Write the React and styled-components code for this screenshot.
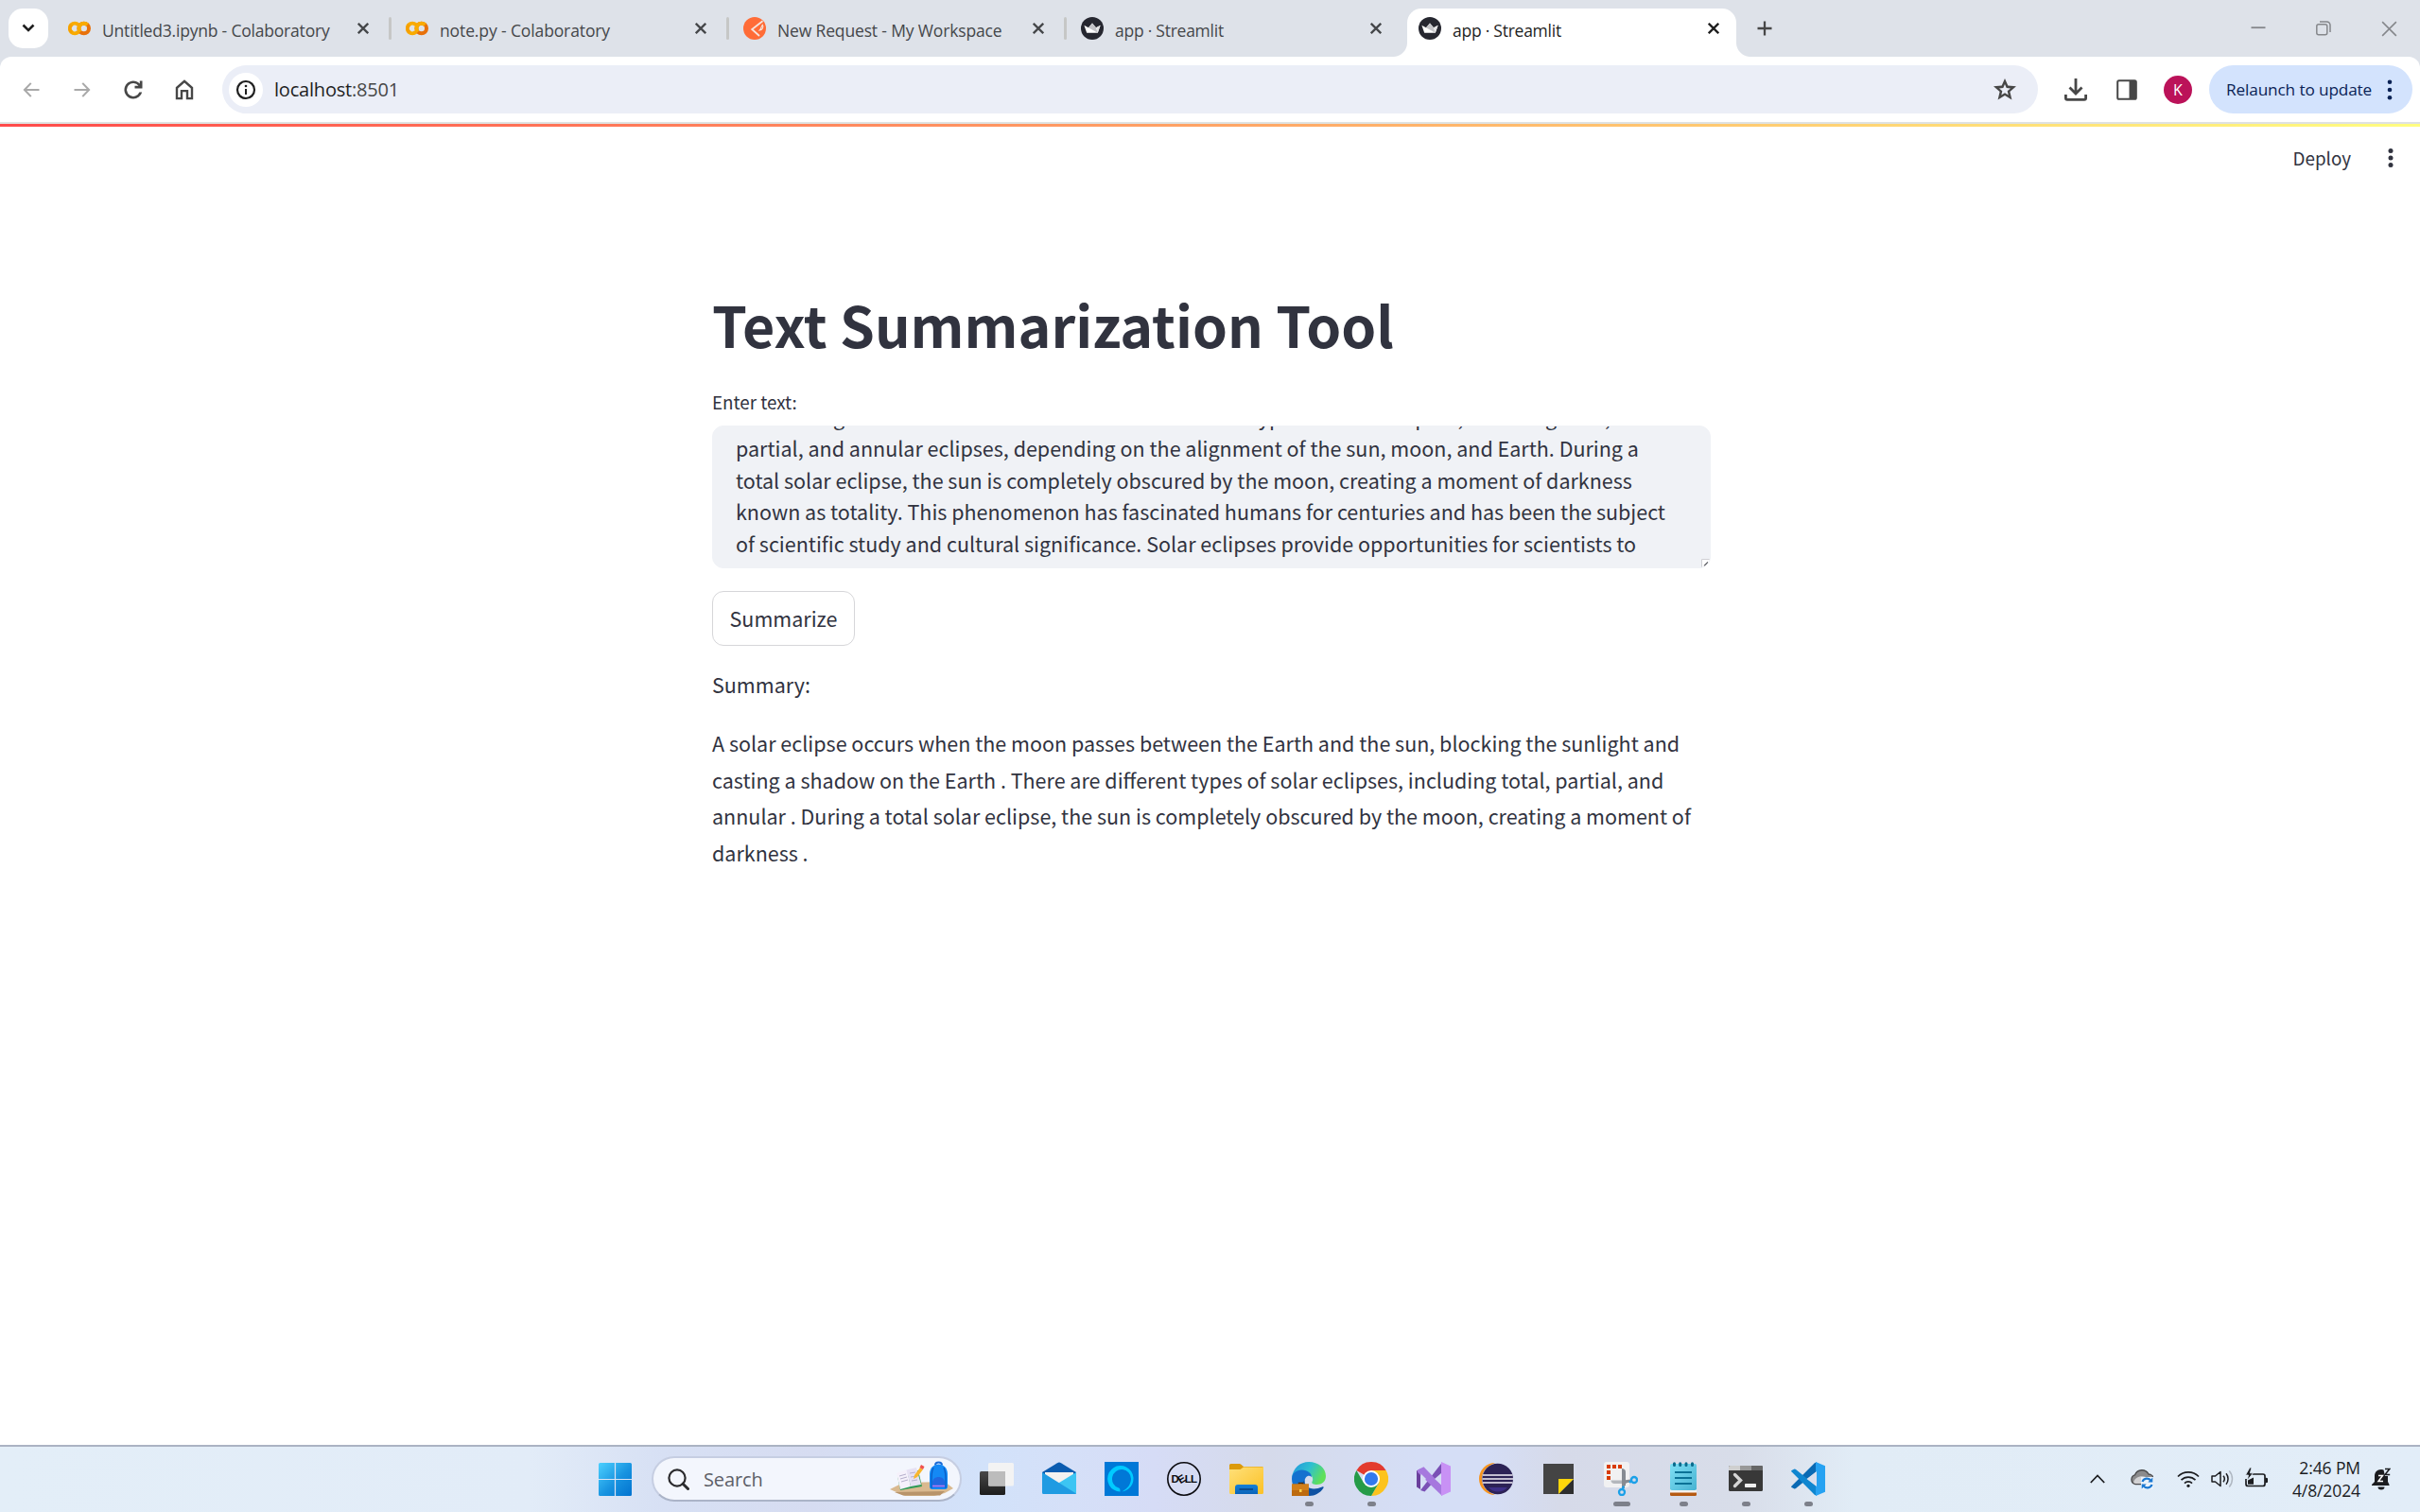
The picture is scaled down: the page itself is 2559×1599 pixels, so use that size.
import React from "react";
import styled, { createGlobalStyle, css } from "styled-components";

const UI_FONT = `"Open Sans", "Noto Sans", sans-serif`;
const APP_FONT = `"Noto Sans CJK SC", "Noto Sans", sans-serif`;

const GlobalStyle = createGlobalStyle`
  *, *::before, *::after { box-sizing: border-box; }
  html, body { margin: 0; padding: 0; background: #fff; }
  body { font-family: ${UI_FONT}; overflow: hidden; }
  svg { display: block; flex: none; }
`;

const Screen = styled.div`
  width: 2559px;
  height: 1599px;
  display: flex;
  flex-direction: column;
  background: #fff;
  overflow: hidden;
`;

/* ---------- Browser tab strip ---------- */

const TabStrip = styled.header`
  height: 60px;
  flex: none;
  display: flex;
  padding: 9px 0 0 9px;
  background: #dee2e9;
`;

const TabSearch = styled.button`
  width: 42px;
  height: 42px;
  margin-right: 9px;
  padding: 0;
  border: 0;
  border-radius: 15px;
  background: #fff;
  display: flex;
  align-items: center;
  justify-content: center;
`;

const Tab = styled.div`
  position: relative;
  width: 348px;
  height: 51px;
  padding: 0 18px 9px 12px;
  display: flex;
  align-items: center;
  color: ${(p) => (p.$active ? "#1f1f1f" : "#45474a")};
  ${(p) =>
    p.$active &&
    css`
      background: #fff;
      border-radius: 15px 15px 0 0;
      &::before,
      &::after {
        content: "";
        position: absolute;
        bottom: 0;
        width: 15px;
        height: 15px;
      }
      &::before {
        left: -15px;
        background: radial-gradient(circle at 0 0, transparent 14.5px, #fff 15.5px);
      }
      &::after {
        right: -15px;
        background: radial-gradient(circle at 100% 0, transparent 14.5px, #fff 15.5px);
      }
    `}
`;

const TabTitle = styled.span`
  flex: 1;
  margin-left: 12px;
  padding-top: 3px;
  font-size: 17.5px;
  line-height: 26px;
  letter-spacing: ${(p) => p.$track || 0}px;
  white-space: nowrap;
`;

const TabGap = styled.div`
  width: 9px;
  height: 42px;
  display: flex;
  align-items: center;
  justify-content: center;
  &::after {
    content: "";
    width: 3px;
    height: 24px;
    border-radius: 1.5px;
    background: ${(p) => (p.$line ? "#c6c7c6" : "transparent")};
  }
`;

const NewTab = styled.div`
  width: 60px;
  height: 42px;
  display: flex;
  align-items: center;
  justify-content: center;
`;

const WindowControls = styled.div`
  margin-left: auto;
  height: 42px;
  display: flex;
  align-items: center;
  gap: 53px;
  padding-right: 24px;
`;

/* ---------- Browser toolbar ---------- */

const ToolbarBack = styled.div`
  flex: none;
  background: #dee2e9;
`;

const Toolbar = styled.div`
  height: 71px;
  padding: 9px 8px 9px 21px;
  display: flex;
  align-items: center;
  background: #fff;
  border-bottom: 2px solid #dfe2e1;
  border-radius: 12px 12px 0 0;
`;

const NavButtons = styled.div`
  display: flex;
  gap: 30px;
  width: 214px;
`;

const AddressBar = styled.div`
  width: 1920px;
  height: 51px;
  padding: 0 23px 0 7px;
  border-radius: 26px;
  background: #ebeef7;
  display: flex;
  align-items: center;
`;

const SiteInfo = styled.div`
  width: 36px;
  height: 36px;
  border-radius: 50%;
  background: #fff;
  display: flex;
  align-items: center;
  justify-content: center;
`;

const Address = styled.span`
  flex: 1;
  margin-left: 12px;
  font-size: 20px;
  line-height: 30px;
  letter-spacing: ${(p) => p.$track}px;
  color: #474747;
`;

const Host = styled.span`
  color: #1f1f1f;
`;

const Actions = styled.div`
  margin-left: auto;
  display: flex;
  align-items: center;
`;

const ActionIcon = styled.div`
  width: 54px;
  display: flex;
  justify-content: center;
`;

const Avatar = styled.div`
  width: 30px;
  height: 30px;
  margin: 0 18px 0 12px;
  border-radius: 50%;
  background: #bb1259;
  color: #fff;
  font-size: 16px;
  line-height: 30px;
  text-align: center;
`;

const Relaunch = styled.button`
  width: 215px;
  height: 51px;
  padding: 0 21px 0 18px;
  border: 0;
  border-radius: 26px;
  background: #d3e3fd;
  color: #0a2255;
  display: flex;
  align-items: center;
  justify-content: space-between;
  font-family: ${UI_FONT};
  font-size: 17.2px;
  letter-spacing: ${(p) => p.$track}px;
  white-space: nowrap;
`;

/* ---------- Streamlit page ---------- */

const Page = styled.main`
  flex: 1;
  display: flex;
  flex-direction: column;
  align-items: center;
  background: #fff;
  color: #31333f;
  font-family: ${APP_FONT};
`;

const Decoration = styled.div`
  align-self: stretch;
  height: 3px;
  background: linear-gradient(90deg, #ff4b4b, #fffd80);
`;

const PageHeader = styled.div`
  align-self: stretch;
  height: 65px;
  padding-right: 28px;
  display: flex;
  align-items: center;
  justify-content: flex-end;
  gap: 39px;
`;

const Deploy = styled.span`
  font-size: 18.8px;
  line-height: 30px;
`;

const Block = styled.section`
  width: 1056px;
  margin-left: 3px;
  display: flex;
  flex-direction: column;
  align-items: flex-start;
`;

const Heading = styled.h1`
  margin: 104px 0 0;
  font-size: 59.1px;
  line-height: 79px;
  font-weight: 700;
  white-space: nowrap;
`;

const Label = styled.label`
  margin-top: 28px;
  font-size: 18.8px;
  line-height: 30px;
`;

const TextArea = styled.div`
  position: relative;
  width: 1056px;
  height: 151px;
  margin-top: 10px;
  border: 1px solid #f0f2f6;
  border-radius: 12px;
  background: #f0f2f6;
  overflow: hidden;
`;

const TextAreaContent = styled.div`
  margin: -27.5px 24px 0;
  font-size: 21.5px;
  line-height: 33.6px;
  white-space: nowrap;
`;

const Line = styled.div`
  letter-spacing: 0;
`;

const Resizer = styled.svg`
  position: absolute;
  right: 0;
  bottom: 0;
`;

const Button = styled.button`
  height: 58px;
  width: 151px;
  margin-top: 24px;
  padding: 0;
  border: 1px solid #d6d6d9;
  border-radius: 12px;
  background: #fff;
  color: #31333f;
  font-family: ${APP_FONT};
  font-size: 21.5px;
  line-height: 36px;
`;

const Paragraph = styled.p`
  margin: ${(p) => p.$top}px 0 0;
  font-size: 21.5px;
  line-height: 38.4px;
  white-space: nowrap;
`;

/* ---------- Taskbar ---------- */

const Taskbar = styled.footer`
  height: 71px;
  flex: none;
  display: flex;
  align-items: flex-start;
  padding: 10px 31px 0 633px;
  border-top: 2px solid #abb3c3;
  background: linear-gradient(
    90deg,
    #e3eef8 0,
    #e2ecf8 560px,
    #d7e0f4 700px,
    #d6dcf1 860px,
    #d2e2fa 1040px,
    #d5e0f8 1130px,
    #d6dcf6 1220px,
    #d5daea 1340px,
    #d5def6 1500px,
    #d5def6 1570px,
    #d6dae9 1650px,
    #d8dde9 1840px,
    #e1ecf6 1960px,
    #e2edf8 2559px
  );
`;

const StartButton = styled.div`
  width: 36px;
  height: 49px;
  margin-right: 20px;
  display: flex;
  align-items: center;
`;

const SearchBox = styled.div`
  width: 328px;
  height: 48px;
  margin-right: 19px;
  padding: 0 7px 0 15px;
  border: 2px solid #c6cee2;
  border-bottom-color: #abb4c8;
  border-radius: 24px;
  background: #f3f6fd;
  display: flex;
  align-items: center;
`;

const SearchLabel = styled.span`
  flex: 1;
  margin-left: 15px;
  padding-top: 1px;
  font-size: 20px;
  line-height: 30px;
  letter-spacing: ${(p) => p.$track}px;
  color: #5d6068;
`;

const AppSlot = styled.div`
  width: 36px;
  height: 53px;
  margin-right: 30px;
  padding-top: 6px;
  display: flex;
  flex-direction: column;
  align-items: center;
  justify-content: space-between;
`;

const Running = styled.div`
  width: ${(p) => (p.$wide ? 18 : 9)}px;
  height: 5px;
  margin-left: 1px;
  border-radius: 2.5px;
  background: ${(p) => (p.$on ? "#7d808a" : "transparent")};
`;

const Tray = styled.div`
  height: 47px;
  margin-left: auto;
  display: flex;
  align-items: center;
`;

const TrayItem = styled.div`
  margin-right: ${(p) => p.$gap}px;
`;

const Clock = styled.div`
  margin-right: 12px;
  display: flex;
  flex-direction: column;
  align-items: flex-end;
  font-size: 17.5px;
  line-height: 24px;
  letter-spacing: -0.1px;
  color: #1b1c1f;
  white-space: nowrap;
`;

/* ---------- Icons ---------- */

const ColabIcon = () => (
  <svg width="24" height="24" viewBox="0 0 24 24" fill="none" strokeWidth="4">
    <path d="M10.8 8.2A5.3 5.3 0 1 0 10.8 15.8" stroke="#f9ab00" />
    <path d="M3.6 8.2A5.3 5.3 0 0 0 4 16.2" stroke="#f08c04" strokeWidth="3.6" opacity=".35" />
    <circle cx="16.7" cy="12" r="5.3" stroke="#e8710a" />
    <path d="M12.95 15.75A5.3 5.3 0 0 1 20.45 8.25" stroke="#f9ab00" />
  </svg>
);

const PostmanIcon = () => (
  <svg width="24" height="24" viewBox="0 0 24 24">
    <circle cx="12" cy="12" r="12" fill="#ff6c37" />
    <path d="M20.5 4.2 9.2 13l7.8 7" fill="none" stroke="#f6e5de" strokeWidth="1.8" />
    <path d="M20.3 8.200c1.600 2.400-.4 5.600-3 5.800 1.800-1.600 1-2.600 3-5.800z" fill="none" stroke="#f6e5de" strokeWidth="1.1" />
  </svg>
);

const StreamlitIcon = () => (
  <svg width="24" height="24" viewBox="0 0 24 24">
    <circle cx="12" cy="12" r="12" fill="#262730" />
    <path d="M3.4 8.8 8 11.2 12 6.500l4 4.700 4.600-2.400-2.800 8H6.200z" fill="#fff" />
    <path d="M12 6.500l4 4.700 1.800 5.600L8 11.200z" fill="#c4c4c8" />
    <path d="M16 11.200l4.600-2.400-2.800 8z" fill="#e4e4e6" />
  </svg>
);

const CloseIcon = ({ size = 12, stroke = "#45474a", width = 2.3 }) => (
  <svg width={size} height={size} viewBox="0 0 12 12">
    <path d="M.8.8l10.400 10.400M11.200.8.8 11.200" stroke={stroke} strokeWidth={width} fill="none" />
  </svg>
);

const CaretDown = () => (
  <svg width="14" height="10" viewBox="0 0 14 10">
    <path d="M1.500 1.500 7 7l5.500-5.500" fill="none" stroke="#1f1f1f" strokeWidth="2.6" />
  </svg>
);

const NavIcon = ({ d, color = "#474747" }) => (
  <svg width="24" height="24" viewBox="0 0 24 24">
    <path d={d} fill={color} />
  </svg>
);

const Dots = ({ color, r = 2.3, gap = 8 }) => (
  <svg width="6" height="24" viewBox="0 0 6 24">
    {[-1, 0, 1].map((n) => (
      <circle key={n} cx="3" cy={12 + n * gap} r={r} fill={color} />
    ))}
  </svg>
);

const WindowsLogo = () => (
  <svg width="35" height="35" viewBox="0 0 35 35">
    <defs>
      <linearGradient id="win" x1="0" y1="0" x2="35" y2="35" gradientUnits="userSpaceOnUse">
        <stop offset="0" stopColor="#4cd0ff" />
        <stop offset=".55" stopColor="#1793e0" />
        <stop offset="1" stopColor="#0273d0" />
      </linearGradient>
    </defs>
    <path
      fill="url(#win)"
      d="M1.500 0H16.900V16.900H0V1.500A1.500 1.500 0 0 1 1.500 0zM18.100 0H33.500A1.500 1.500 0 0 1 35 1.500V16.900H18.100zM0 18.100H16.900V35H1.500A1.500 1.500 0 0 1 0 33.500zM18.100 18.100H35V33.500A1.500 1.500 0 0 1 33.500 35H18.100z"
    />
  </svg>
);

const SearchArt = () => (
  <svg width="67" height="38" viewBox="0 0 67 38">
    <path d="M0 30 14 23 58 22 67 29 58 34 47 37H16z" fill="#d9b98f" />
    <path d="M5 33l53-1-5 4.500H14z" fill="#b8946a" />
    <path d="M8 16l22-6 4 17-23 4z" fill="#2f9a56" />
    <path d="M7 13l11-4 4 18-11 3z" fill="#f5f1fb" />
    <path d="M17.500 9.500 28 7l5 18-11 2z" fill="#e6e1f3" />
    <path d="M10 16l7-2M11 19l7-2M12 22l7-2M21 13l6-1M22 17l6-1M23 21l6-1" stroke="#b6b0cc" strokeWidth="1" />
    <path d="M25 19l1-4 6-8 3 2-6 8z" fill="#f8b62d" />
    <path d="M31.500 7 33 4l3.500 2L35 9z" fill="#f0524f" />
    <path d="M48 4.500c0-4 7-4 7 0" fill="none" stroke="#1a6ad6" strokeWidth="2" />
    <path d="M42 14c0-14 19-14 19 0v13a3 3 0 0 1-3 3H45a3 3 0 0 1-3-3z" fill="#1489f5" />
    <path d="M46 7c-2 5-2 8-2 22M57 7c2 5 2 8 2 22" fill="none" stroke="#0a5bc4" strokeWidth="1.200" />
    <path d="M45 23c0-8 13-8 13 0v5H45z" fill="#2167e0" />
    <path d="M45 26.500h13" stroke="#b77bf5" strokeWidth="1.500" />
  </svg>
);

const Art = ({ children }) => (
  <svg width="36" height="36" viewBox="0 0 36 36">
    {children}
  </svg>
);

const TaskViewIcon = () => (
  <Art>
    <defs>
      <linearGradient id="tv" x1="0" y1="0" x2="0" y2="1">
        <stop offset="0" stopColor="#484848" />
        <stop offset="1" stopColor="#1d1d1d" />
      </linearGradient>
    </defs>
    <rect x="0" y="10" width="27" height="25" rx="1.500" fill="url(#tv)" />
    <rect x="9" y="1" width="27" height="24.500" rx="1.500" fill="#f3f3f3" />
    <path d="M9 10h18v15.500H10.500A1.500 1.500 0 0 1 9 24z" fill="#bcbcbc" />
  </Art>
);

const MailIcon = () => (
  <Art>
    <path d="M0 11 16 1.200a4 4 0 0 1 4 0L36 11v8H0z" fill="#0a5cb0" />
    <path d="M3 11h30v9L18 24 3 20z" fill="#f3f1f0" />
    <path d="M36 11v21.500a1.500 1.500 0 0 1-1.500 1.500H10L18 22z" fill="#3cc5f3" />
    <path d="M0 11l36 22.500a2 2 0 0 1-1.500.5h-33A1.500 1.500 0 0 1 0 32.500z" fill="#1f9be2" />
  </Art>
);

const AlexaIcon = () => (
  <Art>
    <path d="M0 0h36v36H0z" fill="#0078d7" />
    <path
      d="M16.500 31.500A13.700 13.700 0 1 1 18.500 31.400C21 29.500 27.500 27 28 18A10 10 0 1 0 15 27.600C16.300 28.200 16.500 29 16.500 31.500z"
      fill="#00caff"
    />
  </Art>
);

const DellText = styled.text`
  font-family: "Liberation Sans", sans-serif;
  font-size: 11.5px;
  font-weight: 700;
`;

const DellIcon = () => (
  <Art>
    <circle cx="18" cy="18" r="17.200" fill="none" stroke="#0c0c10" strokeWidth="1.600" />
    <g fill="#0c0c10">
      <DellText x="4.500" y="22">D</DellText>
      <DellText x="11.600" y="22" transform="rotate(-32 15.500 18)">E</DellText>
      <DellText x="18.800" y="22">L</DellText>
      <DellText x="25" y="22">L</DellText>
    </g>
  </Art>
);

const FolderIcon = () => (
  <Art>
    <defs>
      <linearGradient id="fo" x1="0" y1="0" x2="1" y2="1">
        <stop offset="0" stopColor="#ffe07a" />
        <stop offset="1" stopColor="#fbc126" />
      </linearGradient>
      <linearGradient id="fb" x1="0" y1="0" x2="0" y2="1">
        <stop offset="0" stopColor="#1680d8" />
        <stop offset="1" stopColor="#0a63b8" />
      </linearGradient>
    </defs>
    <path d="M0 3.500A1.500 1.500 0 0 1 1.500 2h8.500c1.500 0 2.500.7 3.500 1.700L15 5h19.500a1.500 1.500 0 0 1 1.500 1.500V12H0z" fill="#dc9a0b" />
    <path d="M0 8h11.500L15 5.500h21v27a1.500 1.500 0 0 1-1.500 1.500h-33A1.500 1.500 0 0 1 0 32.500z" fill="url(#fo)" />
    <path d="M6 34v-7a3 3 0 0 1 3-3h18a3 3 0 0 1 3 3v7z" fill="url(#fb)" />
    <path d="M10.500 29h14.500" stroke="#0a3f7c" strokeWidth="1.500" />
  </Art>
);

const EdgeIcon = () => (
  <Art>
    <defs>
      <linearGradient id="e1" x1="0" y1="0" x2="1" y2=".4">
        <stop offset="0" stopColor="#1f94e0" />
        <stop offset=".55" stopColor="#2fc0cf" />
        <stop offset="1" stopColor="#5fe05a" />
      </linearGradient>
    </defs>
    <path d="M0 17C1 6.500 9 0 18 0c10 0 18 6.500 18 15 0 6-4.500 9-9.500 9-3.500 0-6-1.200-5-3 1.500-2 1-7-4-7.500C10 12.500 2 12 0 17z" fill="url(#e1)" />
    <path d="M0 18c0-6 5-9.500 10.500-9.500C17 8.500 21 12.500 21 16c-3.500-3-7.500 0-7.500 5 0 6 6 11 13 10-12 9-26.500.5-26.500-13z" fill="#1471cf" />
    <path d="M13.500 19c-1 8 8 12 18.500 7.500 1.500-.5 2 .5 1.500 1C30 33 24.500 36 18.500 36 10 33 9 24 13.500 19z" fill="#0f52a3" />
    <path d="M7.500 24v-1.500h4V24" fill="none" stroke="#4b2a08" strokeWidth="1.500" />
    <path d="M0 23.500h18V36H0z" fill="#bd6a0e" />
    <path d="M0 23.500h18V30H0z" fill="#d27f1a" />
    <path d="M8 29h2.500v3H8z" fill="#ffd24a" />
  </Art>
);

const ChromeIcon = () => (
  <Art>
    <path d="M18 18 2.410 9A18 18 0 0 1 33.590 9z" fill="#e33b2e" />
    <path d="M18 9H33.590A18 18 0 0 1 18 36L25.800 22.500z" fill="#fcc31e" />
    <path d="M2.410 9A18 18 0 0 0 18 36L25.800 22.500 10.200 22.500z" fill="#259b48" />
    <circle cx="18" cy="18" r="9" fill="#fff" />
    <circle cx="18" cy="18" r="7.100" fill="#3279ee" />
  </Art>
);

const VisualStudioIcon = () => (
  <Art>
    <path d="M0 9.500 4 7.500V29L0 26.500z" fill="#6a3f9c" />
    <path d="M4 29.500 8.500 31 27 11V0z" fill="#7a50b5" transform="translate(0 .5)" />
    <path d="M1 8.500 7.500 5.200 27 25.500V36L1 11z" fill="#a678de" />
    <path d="M26 0 36 4.500v27L26 36z" fill="#c891f5" />
    <path d="M4.500 12.500 10 18l-5.500 5.500z" fill="#d5dcf3" />
    <path d="M19 18l7-6v12z" fill="#d5dcf3" />
  </Art>
);

const EclipseIcon = () => (
  <Art>
    <path d="M17 1A17 17 0 0 0 17 35C8 31 3 26 3 18S8 5 17 1z" fill="#f7941e" />
    <circle cx="19.700" cy="18" r="16.300" fill="#2c2255" />
    <path d="M10 27h20c-5 6-15 6-20 0z" fill="#3d2f86" />
    <path d="M4 14h31.500M3.500 18H36M4 22h31.500" stroke="#f2f0f8" strokeWidth="1.700" />
  </Art>
);

const StickyIcon = () => (
  <Art>
    <path d="M2 2h32v16L18 34H2z" fill="#444" />
    <path d="M34 18v16H18z" fill="#2e2e2e" />
    <path d="M18 18h16L18 34z" fill="#ffd60a" />
  </Art>
);

const SnipIcon = () => (
  <Art>
    <rect x="0" y="0" width="27" height="27" rx="3" fill="#f1f1f2" />
    <path d="M3 3h4v4H3zM9 3h4v4H9zM15 3h4v4h-4zM3 9h4v4H3zM3 15h4v4H3z" fill="#d83b01" />
    <path d="M7.500 19.500H24v3.500H11c-2 0-3.500-1.500-3.500-3.500z" fill="#b4b8bd" />
    <path d="M19 7c2 0 4 1.500 4 3.500V25l-4 2z" fill="#868b92" />
    <path d="M22 21l6-1M20.500 23v5" stroke="#868b92" strokeWidth="3" />
    <circle cx="32" cy="19" r="3" fill="none" stroke="#1ba0e8" strokeWidth="2.300" />
    <circle cx="19" cy="32" r="3" fill="none" stroke="#1ba0e8" strokeWidth="2.300" />
    <path d="M29 20l-2 1.800M20 28.500l.8-3" stroke="#1ba0e8" strokeWidth="2.400" />
  </Art>
);

const NotepadIcon = () => (
  <Art>
    <defs>
      <linearGradient id="np" x1="0" y1="0" x2="1" y2="1">
        <stop offset="0" stopColor="#7fe0f5" />
        <stop offset="1" stopColor="#48b3d2" />
      </linearGradient>
    </defs>
    <path d="M4 32h28v2.500a1.500 1.500 0 0 1-1.500 1.500h-25A1.500 1.500 0 0 1 4 34.500z" fill="#b55a12" />
    <path d="M4 29h28v3.500H4z" fill="#f6f1ec" />
    <rect x="4" y="2" width="28" height="28" rx="1.800" fill="url(#np)" />
    <path d="M8.500 1.700v1.800M14.700 1.700v1.800M21 1.700v1.800M27.500 1.700v1.800" stroke="#0b6b8d" strokeWidth="3" strokeLinecap="round" />
    <path d="M9 11h18M9 17h18M9 23h18" stroke="#0b7296" strokeWidth="2" />
  </Art>
);

const TerminalIcon = () => (
  <Art>
    <rect x="0" y="4" width="36" height="27" rx="1.500" fill="#383838" />
    <path d="M1.500 4H12v5H0V5.500A1.500 1.500 0 0 1 1.500 4z" fill="#cfcfcf" />
    <path d="M12 4h12v5H12z" fill="#989898" />
    <path d="M24 4h10.500A1.500 1.500 0 0 1 36 5.500V9H24z" fill="#666" />
    <path d="M6.500 13.500l6 6-6 6" fill="none" stroke="#d6d6d6" strokeWidth="3.400" strokeLinecap="round" />
    <rect x="17" y="23" width="12" height="4" rx=".8" fill="#f0f0f0" />
  </Art>
);

const VSCodeIcon = () => (
  <Art>
    <path d="M.6 25.500a1 1 0 0 0 0 1.600L3 28.200a2 2 0 0 0 2-.2L27 10V.5l-2 .5z" fill="#0a6ab4" />
    <path d="M.6 10.500a1 1 0 0 1 0-1.600L3 7.800a2 2 0 0 1 2 .2L27 26v9.500l-2-.5z" fill="#0f86d0" />
    <path d="M26 0 36 4.300V31.700L26 36z" fill="#26a2f2" />
    <path d="M16.500 18 27 10v16z" fill="#d8dfee" />
  </Art>
);

const APPS = [
  { name: "Task View", Icon: TaskViewIcon },
  { name: "Mail", Icon: MailIcon },
  { name: "Alexa", Icon: AlexaIcon },
  { name: "Dell", Icon: DellIcon },
  { name: "File Explorer", Icon: FolderIcon },
  { name: "Edge", Icon: EdgeIcon, running: true },
  { name: "Chrome", Icon: ChromeIcon, running: true },
  { name: "Visual Studio", Icon: VisualStudioIcon },
  { name: "Eclipse", Icon: EclipseIcon },
  { name: "Sticky Notes", Icon: StickyIcon },
  { name: "Snipping Tool", Icon: SnipIcon, running: true, wide: true },
  { name: "Notepad", Icon: NotepadIcon, running: true },
  { name: "Terminal", Icon: TerminalIcon, running: true },
  { name: "VS Code", Icon: VSCodeIcon, running: true },
];

const TABS = [
  { title: "Untitled3.ipynb - Colaboratory", Icon: ColabIcon, track: -0.2 },
  { title: "note.py - Colaboratory", Icon: ColabIcon, track: -0.12 },
  { title: "New Request - My Workspace", Icon: PostmanIcon, track: -0.15 },
  { title: "app · Streamlit", Icon: StreamlitIcon, track: -0.25 },
  { title: "app · Streamlit", Icon: StreamlitIcon, track: -0.25, active: true },
];

const ENTERED = [
  "and casting a shadow on the Earth. There are different types of solar eclipses, including total,",
  "partial, and annular eclipses, depending on the alignment of the sun, moon, and Earth. During a",
  "total solar eclipse, the sun is completely obscured by the moon, creating a moment of darkness",
  "known as totality. This phenomenon has fascinated humans for centuries and has been the subject",
  "of scientific study and cultural significance. Solar eclipses provide opportunities for scientists to",
];

const SUMMARY = [
  "A solar eclipse occurs when the moon passes between the Earth and the sun, blocking the sunlight and",
  "casting a shadow on the Earth . There are different types of solar eclipses, including total, partial, and",
  "annular . During a total solar eclipse, the sun is completely obscured by the moon, creating a moment of",
  "darkness .",
];

export default function App() {
  return (
    <>
      <GlobalStyle />
      <Screen>
        <TabStrip>
          <TabSearch>
            <CaretDown />
          </TabSearch>
          {TABS.map((t, i) => (
            <React.Fragment key={i}>
              <Tab $active={t.active}>
                <t.Icon />
                <TabTitle $track={t.track}>{t.title}</TabTitle>
                <CloseIcon stroke={t.active ? "#1f1f1f" : "#45474a"} />
              </Tab>
              {i < TABS.length - 1 && <TabGap $line={i < 3} />}
            </React.Fragment>
          ))}
          <NewTab>
            <svg width="16" height="16" viewBox="0 0 16 16">
              <path d="M8 .5v15M.5 8h15" stroke="#474747" strokeWidth="2.300" />
            </svg>
          </NewTab>
          <WindowControls>
            <svg width="16" height="16" viewBox="0 0 16 16">
              <path d="M.5 7.200h15" stroke="#85878b" strokeWidth="1.800" />
            </svg>
            <svg width="16" height="16" viewBox="0 0 16 16" fill="none" stroke="#85878b" strokeWidth="1.500">
              <rect x=".8" y="3.800" width="11" height="11" rx="2" />
              <path d="M4 1h7.500A3.500 3.500 0 0 1 15 4.500V12" />
            </svg>
            <CloseIcon size={17} stroke="#85878b" width={1.1} />
          </WindowControls>
        </TabStrip>

        <ToolbarBack>
          <Toolbar>
            <NavButtons>
              <NavIcon color="#a9a9a9" d="M20.500 11H7.300l5.200-5.400L11 4.200 3.500 12l7.500 7.800 1.500-1.400L7.300 13h13.200z" />
              <NavIcon color="#a9a9a9" d="M3.500 11h13.200l-5.200-5.400L13 4.200l7.500 7.800-7.500 7.800-1.500-1.400 5.200-5.400H3.500z" />
              <NavIcon d="M12 21.500a9.500 9.500 0 1 1 6.800-16.100V2.500H21.500V10.500H13.500V7.800h4A6.900 6.900 0 1 0 18.400 14.500H21.200A9.500 9.500 0 0 1 12 21.500z" />
              <NavIcon d="M2.800 22.300V9.200L12 1.300l9.200 7.900v13.100h-7.400V14.300h-3.600v8zM5.200 19.900h2.600v-8h8.400v8h2.600V10.400L12 4.500l-6.800 5.900z" />
            </NavButtons>
            <AddressBar>
              <SiteInfo>
                <svg width="22" height="22" viewBox="0 0 22 22">
                  <circle cx="11" cy="11" r="9" fill="none" stroke="#1f1f1f" strokeWidth="2.200" />
                  <path d="M11 10v6" stroke="#1f1f1f" strokeWidth="2" />
                  <circle cx="11" cy="7" r="1.300" fill="#1f1f1f" />
                </svg>
              </SiteInfo>
              <Address $track={-0.2}>
                <Host>localhost</Host>:8501
              </Address>
              <NavIcon d="M4.600 22.500 6.600 14 0 8.300l8.700-.8L12 0l3.300 7.500 8.700.8L17.400 14l2 8.500L12 18zM8.300 17.500 12 15.300l3.700 2.200-1-4.200L18 10.500l-4.300-.4L12 6l-1.700 4.100-4.300.4 3.300 2.800z" />
            </AddressBar>
            <Actions>
              <ActionIcon>
                <svg width="26" height="26" viewBox="0 0 26 26" fill="none" stroke="#474747" strokeWidth="2.800">
                  <path d="M13 1v16M6.500 10.500 13 17l6.500-6.500M2.400 18v3.800c0 1 .6 1.600 1.600 1.600h18c1 0 1.600-.6 1.600-1.600V18" />
                </svg>
              </ActionIcon>
              <ActionIcon>
                <svg width="22" height="22" viewBox="0 0 22 22">
                  <rect x="1.200" y="1.200" width="19.600" height="19.600" rx="1.600" fill="none" stroke="#474747" strokeWidth="2" />
                  <path d="M13.500 1H21v20h-7.500z" fill="#474747" />
                </svg>
              </ActionIcon>
              <Avatar>K</Avatar>
              <Relaunch $track={-0.12}>
                Relaunch to update
                <Dots color="#0a2255" gap={8.3} />
              </Relaunch>
            </Actions>
          </Toolbar>
        </ToolbarBack>

        <Page>
          <Decoration />
          <PageHeader>
            <Deploy>Deploy</Deploy>
            <Dots color="#31333f" r={2.5} gap={7.5} />
          </PageHeader>
          <Block>
            <Heading>Text Summarization Tool</Heading>
            <Label>Enter text:</Label>
            <TextArea>
              <TextAreaContent>
                {ENTERED.map((l) => (
                  <Line key={l}>{l}</Line>
                ))}
              </TextAreaContent>
              <Resizer width="9" height="9" viewBox="0 0 9 9">
                <path d="M0 0h9v9H0z" fill="#fff" />
                <path d="M.5 9V.5H9" fill="none" stroke="#cfd0d4" />
                <path d="M3 7.500l4-4" stroke="#55565c" strokeWidth="1.200" />
              </Resizer>
            </TextArea>
            <Button>Summarize</Button>
            <Paragraph $top={22}>Summary:</Paragraph>
            <Paragraph $top={24}>
              {SUMMARY.map((l) => (
                <Line key={l}>{l}</Line>
              ))}
            </Paragraph>
          </Block>
        </Page>

        <Taskbar>
          <StartButton>
            <WindowsLogo />
          </StartButton>
          <SearchBox>
            <svg width="23" height="23" viewBox="0 0 23 23" fill="none" stroke="#2b2b2e" strokeWidth="2.200">
              <circle cx="10" cy="10" r="8.600" />
              <path d="M16.200 16.200 21.500 21.500" strokeWidth="3" strokeLinecap="round" />
            </svg>
            <SearchLabel $track={-0.1}>Search</SearchLabel>
            <SearchArt />
          </SearchBox>
          {APPS.map(({ name, Icon, running, wide }) => (
            <AppSlot key={name}>
              <Icon />
              <Running $on={running} $wide={wide} />
            </AppSlot>
          ))}
          <Tray>
            <TrayItem $gap={27}>
              <svg width="16" height="10" viewBox="0 0 16 10">
                <path d="M.8 9 8 1.500 15.200 9" fill="none" stroke="#1b1c1f" strokeWidth="1.700" />
              </svg>
            </TrayItem>
            <TrayItem $gap={25}>
              <svg width="24" height="22" viewBox="0 0 24 22">
                <path d="M5 16.500a5 5 0 0 1-.5-9.700A8 8 0 0 1 19 6a5.300 5.300 0 0 1 1 10.500z" fill="#8b8b8d" stroke="#4a4a4c" strokeWidth="1.300" />
                <path d="M3 15c1-6 8-8 13-6v7H5z" fill="#d2d2d4" />
                <path d="M11 9h13v13H11z" fill="#eaf2fb" />
                <path d="M12.500 14a5 5 0 0 1 9-1M22.500 17a5 5 0 0 1-9 1" fill="none" stroke="#1a78d2" strokeWidth="2.200" />
                <path d="M23.300 9.500v5h-5zM11.700 21.500v-5h5z" fill="#1a78d2" />
              </svg>
            </TrayItem>
            <TrayItem $gap={12}>
              <svg width="24" height="20" viewBox="0 0 24 20" fill="none" stroke="#1b1c1f" strokeWidth="1.700">
                <path d="M1 7.500a15.600 15.600 0 0 1 22 0M4.500 11.200a10.600 10.600 0 0 1 15 0M8 14.600a5.700 5.700 0 0 1 8 0" />
                <circle cx="12" cy="17.300" r="1.600" fill="#1b1c1f" stroke="none" />
              </svg>
            </TrayItem>
            <TrayItem $gap={12}>
              <svg width="24" height="20" viewBox="0 0 24 20" fill="none" stroke="#1b1c1f" strokeWidth="1.500">
                <path d="M1 7v6h3.500L10 17.500v-15L4.500 7z" strokeLinejoin="round" />
                <path d="M13 6.800a5 5 0 0 1 0 6.400M16 4.300a9 9 0 0 1 0 11.400" />
                <path d="M19.300 1.500a13 13 0 0 1 0 17" stroke="#b0b8c2" />
              </svg>
            </TrayItem>
            <TrayItem $gap={26}>
              <svg width="24" height="24" viewBox="0 -4 24 24">
                <path d="M7.500 3H19a2 2 0 0 1 2 2v8.500a2 2 0 0 1-2 2H3a2 2 0 0 1-2-2V8" fill="none" stroke="#1b1c1f" strokeWidth="1.700" />
                <path d="M22 7.500a2 2 0 0 1 0 4z" fill="#1b1c1f" stroke="#1b1c1f" strokeWidth="1.500" />
                <path d="M3 9.500 9 6.500v7.200H3z" fill="#1b1c1f" />
                <path d="M5-4 .5 4h3l-1.200 5.500L8.500 1.800H5.300L7-4z" fill="#1b1c1f" stroke="#e2edf8" strokeWidth=".8" />
              </svg>
            </TrayItem>
            <Clock>
              <span>2:46 PM</span>
              <span>4/8/2024</span>
            </Clock>
            <svg width="20" height="24" viewBox="0 0 20 24">
              <path d="M10 2C5.500 2 3 5 3 9v6L0 18v1h18.500v-1L17 15V9c0-4-2.500-7-7-7z" fill="#1b1c1f" />
              <path d="M6.500 20.500h7a3.500 3 0 0 1-7 0z" fill="#1b1c1f" />
              <path d="M12 0h8v9h-6z" fill="#e2edf8" />
              <path d="M14 1.500h4.800l-4.800 6h5.200" fill="none" stroke="#1b1c1f" strokeWidth="1.500" />
              <path d="M7 8.500h4.500l-4.500 6h5" fill="none" stroke="#fff" strokeWidth="1.500" />
            </svg>
          </Tray>
        </Taskbar>
      </Screen>
    </>
  );
}
